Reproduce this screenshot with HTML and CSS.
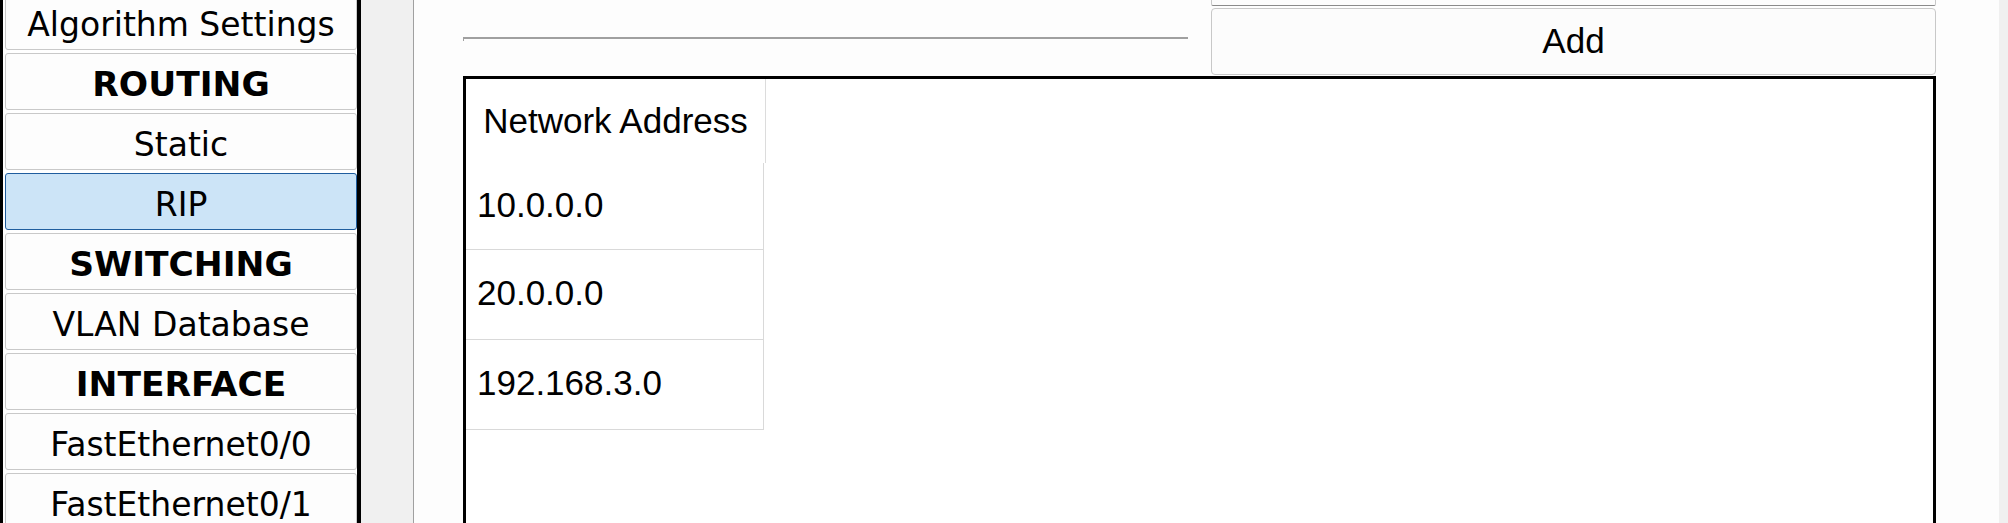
FILE: index.html
```html
<!DOCTYPE html>
<html>
<head>
<meta charset="utf-8">
<link rel="stylesheet" href="styles.css">
</head>
<body>
<div class="app">
  <nav class="sidebar">
    <ul class="menu">
      <li class="item">Algorithm Settings</li>
      <li class="item head">ROUTING</li>
      <li class="item">Static</li>
      <li class="item selected">RIP</li>
      <li class="item head">SWITCHING</li>
      <li class="item">VLAN Database</li>
      <li class="item head">INTERFACE</li>
      <li class="item">FastEthernet0/0</li>
      <li class="item">FastEthernet0/1</li>
    </ul>
  </nav>
  <div class="spacer"></div>
  <main class="main">
    <div class="toprow">
      <div class="fieldwrap"><div class="field"></div></div>
      <div class="buttons">
        <div class="btn prev"></div>
        <div class="btn add">Add</div>
      </div>
    </div>
    <div class="tablebox">
      <div class="col">
        <div class="th">Network Address</div>
        <div class="td first">10.0.0.0</div>
        <div class="td">20.0.0.0</div>
        <div class="td">192.168.3.0</div>
      </div>
    </div>
  </main>
  <div class="edge"></div>
</div>
</body>
</html>
```

FILE: styles.css
```css
html, body {
  margin: 0;
  padding: 0;
  width: 2008px;
  height: 523px;
  overflow: hidden;
  background: #ffffff;
}

.app {
  display: flex;
  height: 523px;
  overflow: hidden;
}

.sidebar {
  width: 352px;
  flex: none;
  border-left: 3px solid #000;
  border-right: 4px solid #000;
  padding-left: 2px;
  background: #fff;
  overflow: hidden;
}

.menu {
  list-style: none;
  margin: -7px 0 0 0;
  padding: 0;
  display: flex;
  flex-direction: column;
  gap: 3px;
}

.item {
  box-sizing: border-box;
  height: 57px;
  padding-top: 5px;
  border: 1px solid #c9c9c9;
  border-radius: 3px;
  background: #fdfdfd;
  font-family: "DejaVu Sans", Verdana, sans-serif;
  font-size: 33px;
  color: #000;
  display: flex;
  align-items: center;
  justify-content: center;
  white-space: nowrap;
}

.item.head {
  font-weight: bold;
  font-size: 34.5px;
}

.item.selected {
  background: #cce4f7;
  border-color: #1f5d9e;
}

.spacer {
  width: 52px;
  flex: none;
  background: #f0f0f0;
}

.main {
  flex: none;
  width: 1586px;
  box-sizing: border-box;
  border-left: 1px solid #a0a0a0;
  background: #fdfdfd;
  padding: 0 63px 0 49px;
}

.toprow {
  display: flex;
  align-items: flex-start;
  gap: 23px;
  height: 76px;
}

.fieldwrap {
  flex: 1;
  padding-top: 37px;
}

.field {
  height: 2px;
  border-top: 2px solid #a0a0a0;
  border-left: 1px solid #a0a0a0;
}

.buttons {
  width: 725px;
  flex: none;
  display: flex;
  flex-direction: column;
  gap: 2px;
  margin-top: -60px;
}

.btn {
  box-sizing: border-box;
  background: #fcfcfc;
  border: 1px solid #c8c8c8;
  border-radius: 4px;
  font-family: "Liberation Sans", Arial, sans-serif;
  font-size: 35px;
  color: #000;
  display: flex;
  align-items: center;
  justify-content: center;
}

.btn.prev {
  height: 66px;
  border-bottom: 1px solid #8a8a8a;
  border-radius: 0 0 2px 2px;
}

.btn.add {
  height: 67px;
  padding-bottom: 2px;
}

.tablebox {
  box-sizing: border-box;
  width: 1473px;
  height: 520px;
  border: 3px solid #000;
  background: #fff;
  display: flex;
}

.col {
  display: flex;
  flex-direction: column;
}

.th {
  box-sizing: border-box;
  width: 300px;
  height: 84px;
  border-right: 1px solid #dcdcdc;
  font-family: "Liberation Sans", Arial, sans-serif;
  font-size: 35px;
  display: flex;
  align-items: center;
  justify-content: center;
  color: #000;
}

.td {
  box-sizing: border-box;
  width: 298px;
  height: 90px;
  border-right: 1px solid #d9d9d9;
  border-bottom: 1px solid #d9d9d9;
  font-family: "Liberation Sans", Arial, sans-serif;
  font-size: 35px;
  padding-left: 11px;
  padding-bottom: 3px;
  display: flex;
  align-items: center;
  color: #000;
}

.td.first {
  height: 87px;
}

.edge {
  flex: 1;
  background: #f0f0f0;
}
```
